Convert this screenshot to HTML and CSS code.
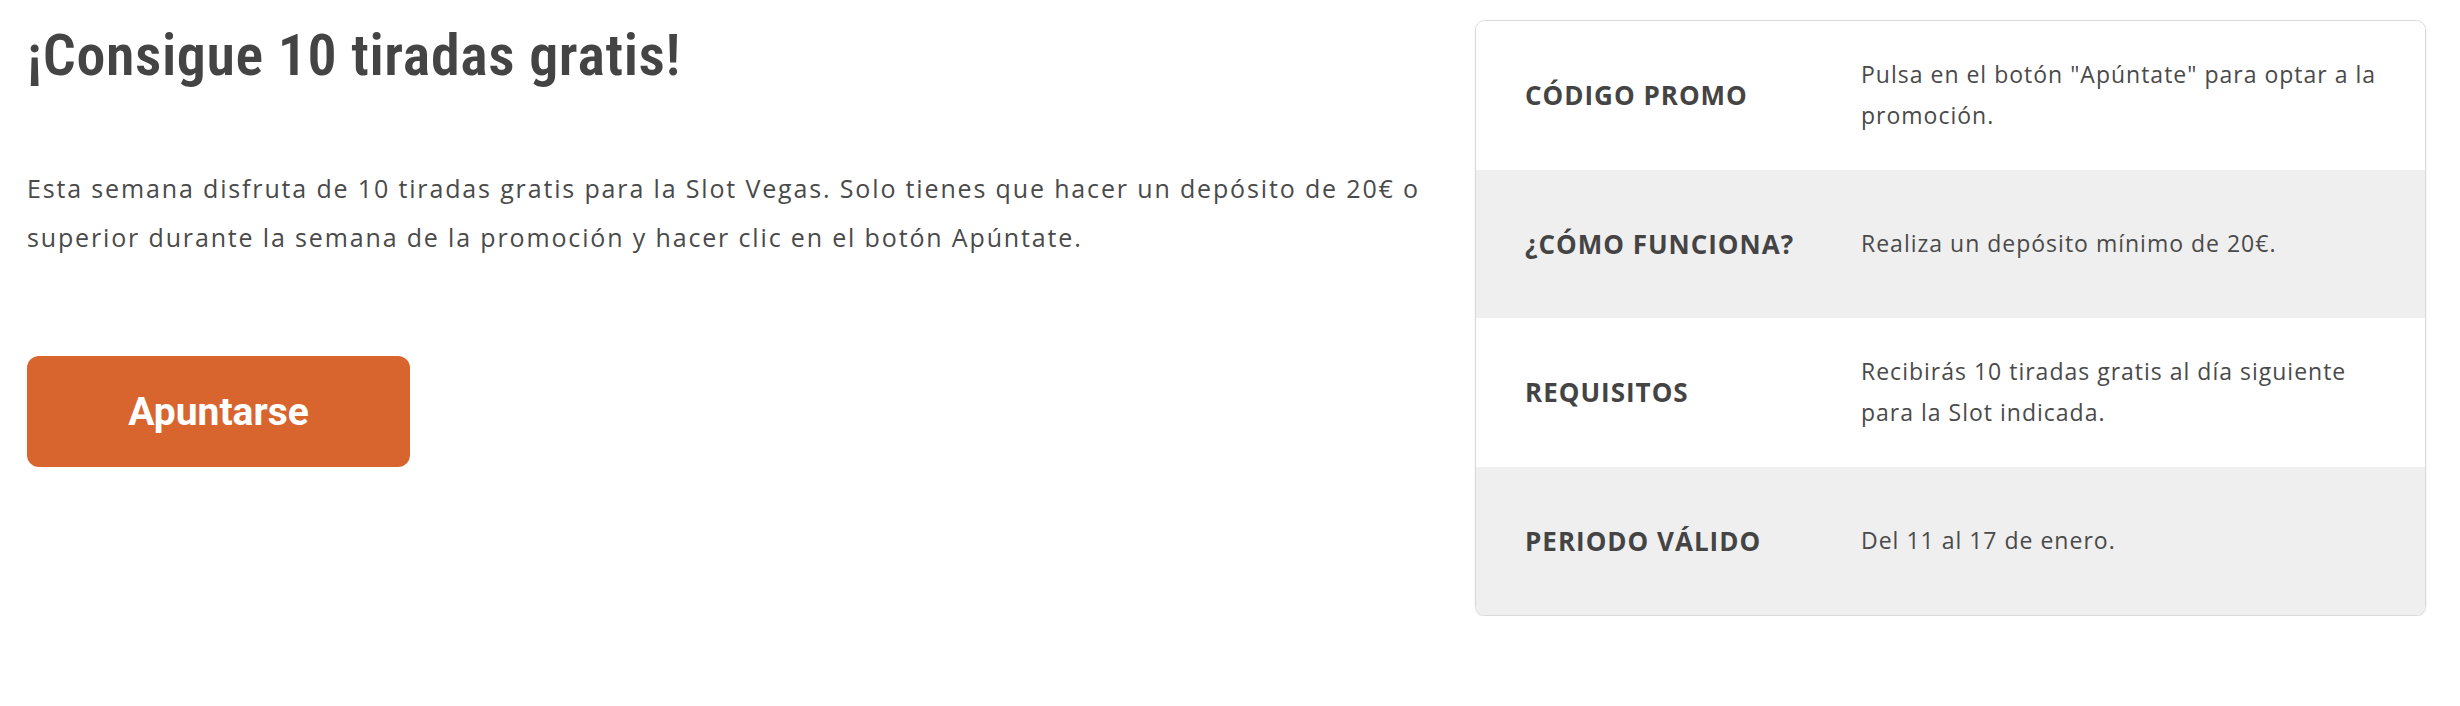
FILE: index.html
```html
<!DOCTYPE html>
<html lang="es">
<head>
<meta charset="utf-8">
<title>Promoción</title>
<link rel="stylesheet" href="styles.css">
</head>
<body>
<main class="promo">
  <section class="intro">
    <h1 class="title">¡Consigue 10 tiradas gratis!</h1>
    <p class="lead">Esta semana disfruta de 10 tiradas gratis para la Slot Vegas. Solo tienes que hacer un depósito de 20€ o superior durante la semana de la promoción y hacer clic en el botón Apúntate.</p>
    <a class="cta" href="#">Apuntarse</a>
  </section>
  <aside class="details">
    <div class="row">
      <div class="label">CÓDIGO PROMO</div>
      <div class="value">Pulsa en el botón "Apúntate" para optar a la promoción.</div>
    </div>
    <div class="row alt">
      <div class="label">¿CÓMO FUNCIONA?</div>
      <div class="value">Realiza un depósito mínimo de 20€.</div>
    </div>
    <div class="row">
      <div class="label">REQUISITOS</div>
      <div class="value">Recibirás 10 tiradas gratis al día siguiente para la Slot indicada.</div>
    </div>
    <div class="row alt">
      <div class="label">PERIODO VÁLIDO</div>
      <div class="value">Del 11 al 17 de enero.</div>
    </div>
  </aside>
</main>
</body>
</html>
```
FILE: styles.css
```css
* { box-sizing: border-box; }

body {
  margin: 0;
  background: #ffffff;
  color: #444444;
  font-family: "Open Sans", "Noto Sans", sans-serif;
}

.promo {
  display: flex;
  align-items: flex-start;
  gap: 24px;
  padding: 20px 34px 0 27px;
}

.intro {
  flex: 1;
  min-width: 0;
}

.title {
  margin: 0;
  font-family: Roboto, "Open Sans", sans-serif;
  font-stretch: condensed;
  font-weight: 600;
  font-size: 58px;
  line-height: 71px;
  letter-spacing: 0.6px;
  color: #444444;
}

.lead {
  margin: 73px 0 0;
  font-family: "Open Sans", "Noto Sans", sans-serif;
  font-size: 25px;
  line-height: 49px;
  letter-spacing: 1.85px;
  color: #4a4a4a;
}

.cta {
  display: flex;
  align-items: center;
  justify-content: center;
  width: 383px;
  height: 111px;
  margin-top: 94px;
  background: #d9652e;
  border-radius: 12px;
  color: #ffffff;
  font-family: Roboto, "Open Sans", sans-serif;
  font-weight: 700;
  font-size: 39px;
  text-decoration: none;
}

.details {
  flex: none;
  width: 951px;
  border: 1px solid #dadada;
  border-radius: 10px;
  overflow: hidden;
  box-shadow: 0 1px 2px rgba(0, 0, 0, 0.12);
}

.row {
  display: grid;
  grid-template-columns: 385px 1fr;
  align-items: center;
  height: 148.5px;
  background: #ffffff;
}

.row.alt {
  background: #efefef;
}

.label {
  padding-left: 49px;
  font-family: "Open Sans", "Noto Sans", sans-serif;
  font-weight: 700;
  font-size: 26px;
  letter-spacing: 1px;
  color: #444444;
}

.value {
  padding-right: 40px;
  font-family: "Open Sans", "Noto Sans", sans-serif;
  font-size: 23px;
  line-height: 41px;
  letter-spacing: 1px;
  color: #4a4a4a;
}
```
